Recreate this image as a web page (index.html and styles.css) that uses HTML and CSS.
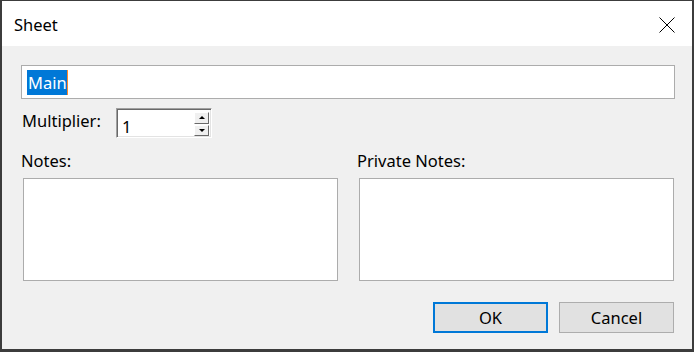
FILE: index.html
```html
<!DOCTYPE html>
<html lang="en">
<head>
    <meta charset="UTF-8">
    <title>Sheet</title>
    <link rel="stylesheet" href="styles.css">
</head>
<body>
    <div class="window">
        <div class="titlebar">
            <span class="title">Sheet</span>
            <svg class="close" width="16" height="16" viewBox="0 0 16 16">
                <path d="M0.5 0.5 L15.5 15.5 M15.5 0.5 L0.5 15.5" stroke="#000" stroke-width="1" fill="none"/>
            </svg>
        </div>

        <div class="content">
            <div class="name-field"><span class="selected">Main</span><span class="caret"></span></div>

            <div class="mult-row">
                <span class="mult-label">Multiplier:</span>
                <div class="spin">
                    <span class="spin-value">1</span>
                    <div class="spin-buttons">
                        <div class="spin-btn"><span class="arrow-up"></span></div>
                        <div class="spin-btn"><span class="arrow-down"></span></div>
                    </div>
                </div>
            </div>

            <div class="notes-row">
                <div class="notes-col">
                    <div class="notes-label">Notes:</div>
                    <div class="notes-box"></div>
                </div>
                <div class="notes-col">
                    <div class="notes-label">Private Notes:</div>
                    <div class="notes-box"></div>
                </div>
            </div>

            <div class="buttons">
                <div class="btn btn-default">OK</div>
                <div class="btn">Cancel</div>
            </div>
        </div>
    </div>
</body>
</html>
```

FILE: styles.css
```css
body {
    margin: 0;
    background: #3c3c3c;
    font-family: "Noto Sans", "Open Sans", sans-serif;
    font-size: 16.5px;
    line-height: 22px;
    color: #000;
}
.window {
    margin: 1px 2px 0;
    width: 690px;
    height: 348px;
    background: #f0f0f0;
}
.titlebar {
    height: 45px;
    box-sizing: border-box;
    background: #fff;
    display: flex;
    justify-content: space-between;
    align-items: flex-start;
    padding: 13px 17px 0 12px;
}
.close {
    margin-top: 3px;
}
.content {
    padding: 19px 17px 0 19px;
}
.name-field {
    width: 654px;
    height: 34px;
    box-sizing: border-box;
    border: 1px solid #acacac;
    background: #fff;
    display: flex;
    align-items: center;
    padding-left: 5px;
}
.selected {
    background: #0078d7;
    color: #fff;
    height: 25px;
    line-height: 25px;
    padding: 0 0 0 1px;
}
.caret {
    width: 1px;
    height: 25px;
    background: #ff8728;
}
.mult-row {
    display: flex;
    margin-top: 9px;
}
.mult-label {
    width: 95px;
    margin-top: 2px;
    padding-left: 1px;
    box-sizing: border-box;
}
.spin {
    width: 96px;
    height: 30px;
    box-sizing: border-box;
    border: 1px solid;
    border-color: #a0a0a0 #fff #fff #a0a0a0;
    box-shadow: inset 1px 1px 0 #696969, inset -1px -1px 0 #e3e3e3;
    background: #fff;
    display: flex;
    justify-content: space-between;
    padding: 1px 2px 1px 5px;
}
.spin-value {
    padding-top: 6px;
}
.spin-buttons {
    display: flex;
    flex-direction: column;
    gap: 1px;
    padding-top: 2px;
}
.spin-btn {
    width: 15px;
    height: 12px;
    box-sizing: border-box;
    background: #f0f0f0;
    border: 1px solid;
    border-color: #fff #696969 #696969 #fff;
    display: flex;
    align-items: center;
    justify-content: center;
}
.arrow-up {
    width: 0;
    height: 0;
    border-left: 3px solid transparent;
    border-right: 3px solid transparent;
    border-bottom: 3px solid #000;
}
.arrow-down {
    width: 0;
    height: 0;
    border-left: 3px solid transparent;
    border-right: 3px solid transparent;
    border-top: 3px solid #000;
}
.notes-row {
    display: flex;
    gap: 19px;
    margin-top: 12px;
}
.notes-col {
    width: 317px;
}
.notes-box {
    margin: 6px 0 0 2px;
    height: 103px;
    box-sizing: border-box;
    border: 1px solid #acacac;
    background: #fff;
}
.buttons {
    display: flex;
    justify-content: flex-end;
    gap: 11px;
    margin-top: 21px;
    width: 653px;
}
.btn {
    width: 115px;
    height: 31px;
    box-sizing: border-box;
    border: 1px solid #adadad;
    background: #e1e1e1;
    display: flex;
    align-items: center;
    justify-content: center;
}
.btn-default {
    border: 2px solid #0078d7;
}
```
